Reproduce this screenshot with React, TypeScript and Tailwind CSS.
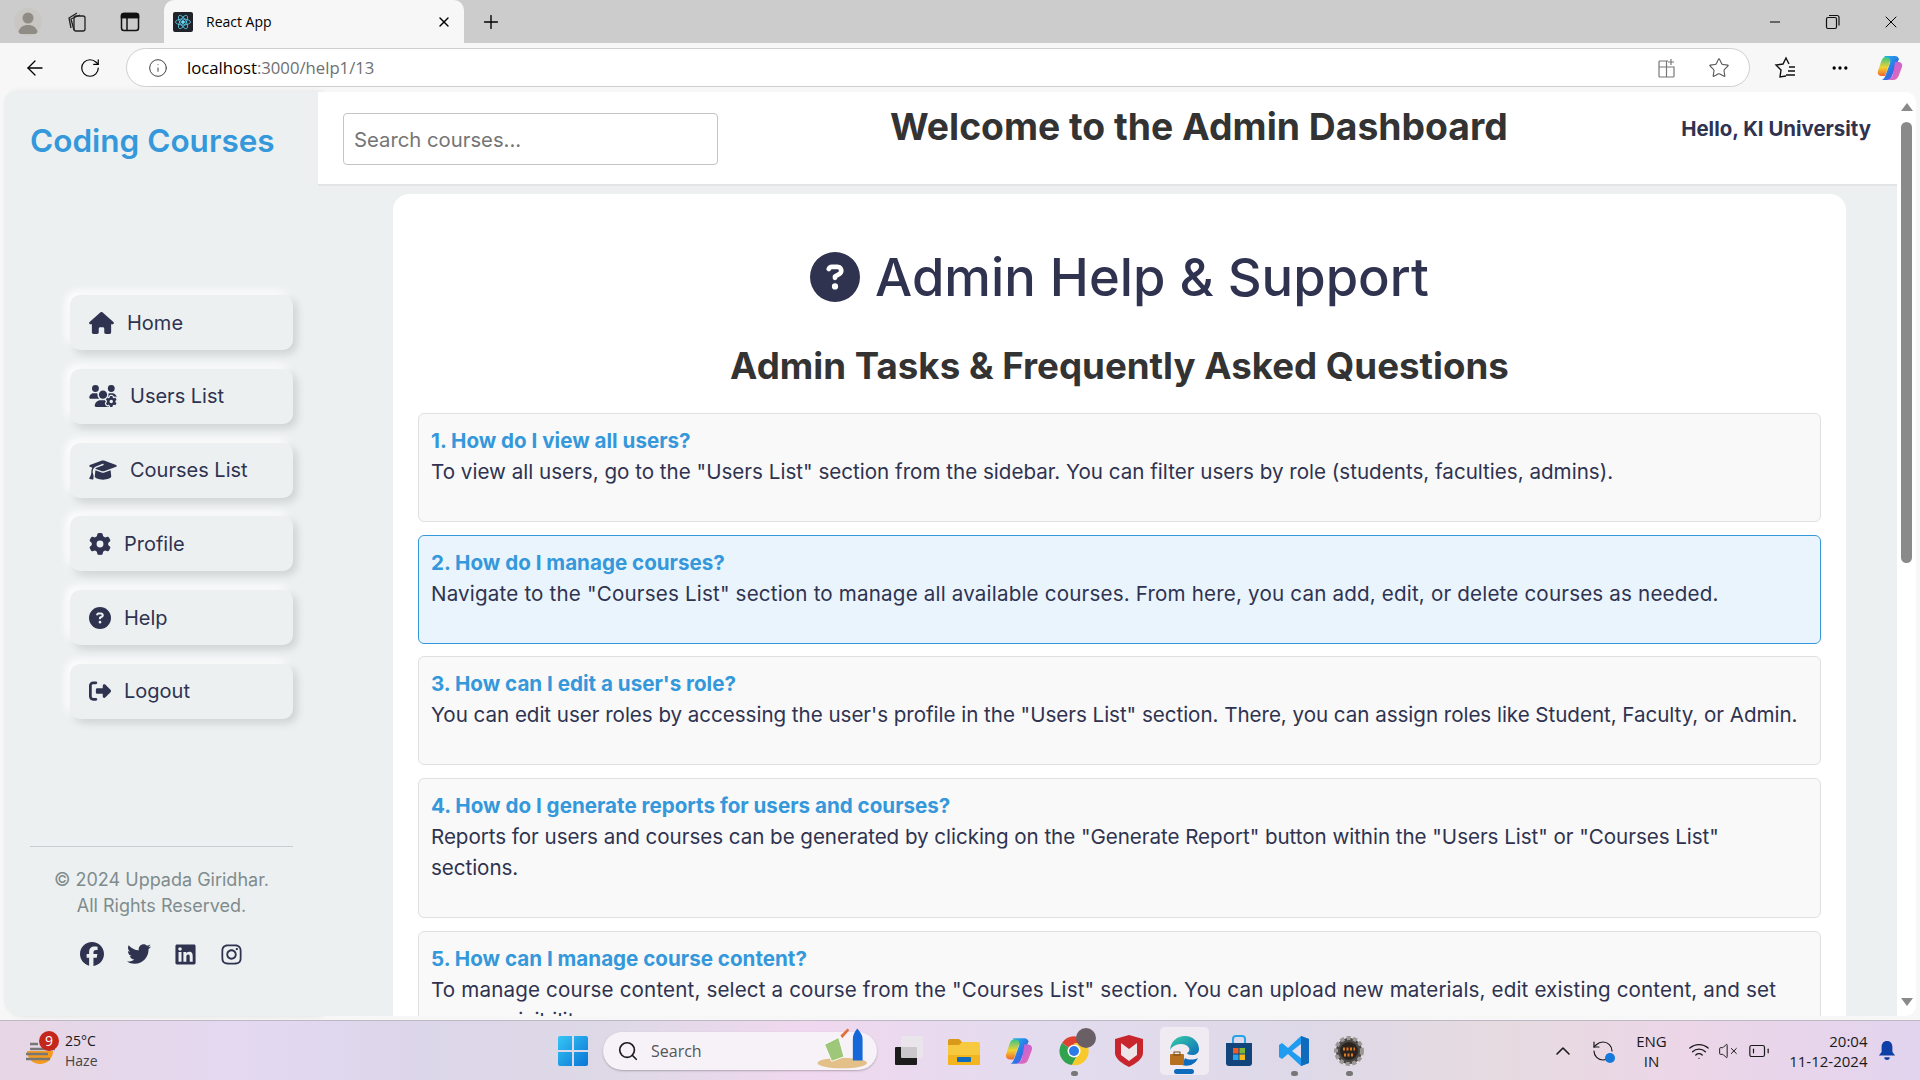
import type { ReactNode } from 'react';
import {
  FaCircleQuestion,
  FaFacebook,
  FaGear,
  FaGraduationCap,
  FaHouse,
  FaInstagram,
  FaLinkedin,
  FaRightFromBracket,
  FaTwitter,
  FaUsersGear,
} from 'react-icons/fa6';
import {
  ArrowLeft,
  BatteryLow,
  ChevronUp,
  Ellipsis,
  Info,
  Minus,
  Plus,
  RefreshCcw,
  RotateCw,
  Search,
  Star,
  VolumeX,
  Wifi,
  X,
} from 'lucide-react';

const UI = 'font-["Open_Sans","Noto_Sans",sans-serif]';

const NAV = [
  { label: 'Home', icon: <FaHouse className="h-[22px] w-[25px]" />, gap: 'gap-[13px]' },
  { label: 'Users List', icon: <FaUsersGear className="h-[22px] w-[28px]" />, gap: 'gap-[13px]' },
  { label: 'Courses List', icon: <FaGraduationCap className="h-[22px] w-[28px]" />, gap: 'gap-[13px]' },
  { label: 'Profile', icon: <FaGear className="h-[22px] w-[22px]" />, gap: 'gap-[13px]' },
  { label: 'Help', icon: <FaCircleQuestion className="h-[22px] w-[22px]" />, gap: 'gap-[13px]' },
  { label: 'Logout', icon: <FaRightFromBracket className="h-[22px] w-[22px] -scale-x-100 rotate-180" />, gap: 'gap-[13px]' },
];

const FAQS = [
  {
    q: '1. How do I view all users?',
    a: 'To view all users, go to the "Users List" section from the sidebar. You can filter users by role (students, faculties, admins).',
    tracking: 'tracking-[0px]',
  },
  {
    q: '2. How do I manage courses?',
    a: 'Navigate to the "Courses List" section to manage all available courses. From here, you can add, edit, or delete courses as needed.',
    tracking: 'tracking-[0.17px]',
    active: true,
  },
  {
    q: "3. How can I edit a user's role?",
    a: 'You can edit user roles by accessing the user\'s profile in the "Users List" section. There, you can assign roles like Student, Faculty, or Admin.',
    tracking: 'tracking-[-0.04px]',
  },
  {
    q: '4. How do I generate reports for users and courses?',
    a: 'Reports for users and courses can be generated by clicking on the "Generate Report" button within the "Users List" or "Courses List" sections.',
    tracking: 'tracking-[-0.05px]',
  },
  {
    q: '5. How can I manage course content?',
    a: 'To manage course content, select a course from the "Courses List" section. You can upload new materials, edit existing content, and set access visibility.',
    tracking: 'tracking-[0.14px]',
  },
];

function Slot({ w, children, className = '' }: { w: string; children: ReactNode; className?: string }) {
  return <div className={`flex shrink-0 items-center justify-center ${w} ${className}`}>{children}</div>;
}

function BrowserChrome() {
  return (
    <div className={`${UI} shrink-0 text-black`}>
      <div className="flex h-[43px] items-end bg-[#cccccc]">
        <div className="flex h-[43px] items-center pl-[14px]">
          <div className="flex h-[28px] w-[28px] items-end justify-center overflow-hidden rounded-full bg-[#c9c7c3]">
            <svg viewBox="0 0 28 28" className="h-[28px] w-[28px]">
              <circle cx="14" cy="10" r="5.5" fill="#8f8c86" />
              <path d="M4 26c1-7 5-9 10-9s9 2 10 9z" fill="#8f8c86" />
            </svg>
          </div>
          <Slot w="w-[53px] ml-[8px]">
            <svg viewBox="0 0 24 24" className="h-[24px] w-[24px]" fill="none" stroke="#222" strokeWidth="1.3">
              <rect x="9" y="6" width="11" height="15" rx="2" />
              <path d="M6 18 4 8l8-5M9 20 6 9l9-4" />
            </svg>
          </Slot>
          <Slot w="w-[53px]">
            <svg viewBox="0 0 20 20" className="h-[20px] w-[20px]" fill="none" stroke="#111" strokeWidth="1.5">
              <rect x="1.5" y="1.5" width="17" height="17" rx="2.5" />
              <path d="M1.5 5.5h17M7 5.5v13" />
              <path d="M1.5 5.5v-2a2 2 0 0 1 2-2h13a2 2 0 0 1 2 2v2z" fill="#111" />
            </svg>
          </Slot>
        </div>
        <div className="ml-[8px] flex h-[43px] w-[300px] items-center rounded-t-[10px] bg-[#f7f7f7] pl-[9px]">
          <div className="flex h-[20px] w-[20px] items-center justify-center rounded-[2px] bg-[#20232a]">
            <svg viewBox="-12 -12 24 24" className="h-[18px] w-[18px]" fill="none" stroke="#61dafb" strokeWidth="1">
              <circle r="2" fill="#61dafb" />
              <ellipse rx="10" ry="4" />
              <ellipse rx="10" ry="4" transform="rotate(60)" />
              <ellipse rx="10" ry="4" transform="rotate(120)" />
            </svg>
          </div>
          <span className="ml-[13px] text-[14px]">React App</span>
          <X className="ml-auto mr-[12px] h-[16px] w-[16px]" strokeWidth={2} />
        </div>
        <Slot w="w-[54px] h-[43px]">
          <Plus className="h-[22px] w-[22px]" strokeWidth={1.5} />
        </Slot>
        <div className="ml-auto flex h-[43px] items-center">
          <Slot w="w-[58px]"><Minus className="h-[16px] w-[16px]" strokeWidth={1.5} /></Slot>
          <Slot w="w-[58px]">
            <svg viewBox="0 0 16 16" className="h-[16px] w-[16px]" fill="none" stroke="#111" strokeWidth="1.2">
              <rect x="1.5" y="3.5" width="10" height="11" rx="1.5" />
              <path d="M4 1.5h8a2 2 0 0 1 2 2v8" />
            </svg>
          </Slot>
          <Slot w="w-[58px]"><X className="h-[20px] w-[20px]" strokeWidth={1.2} /></Slot>
        </div>
      </div>
      <div className="flex h-[49px] items-center bg-[#f7f7f7]">
        <Slot w="w-[70px]"><ArrowLeft className="h-[24px] w-[24px]" strokeWidth={1.3} /></Slot>
        <Slot w="w-[40px]"><RotateCw className="h-[22px] w-[22px]" strokeWidth={1.3} /></Slot>
        <div className="ml-[16px] flex h-[39px] w-[1624px] shrink-0 items-center rounded-full border border-[#cfcfcf] bg-white">
          <Info className="ml-[21px] h-[20px] w-[20px] text-[#444]" strokeWidth={1.2} />
          <span className="ml-[19px] text-[16.7px]">
            localhost<span className="text-[#6f6f6f]">:3000/help1/13</span>
          </span>
          <div className="ml-auto flex items-center pr-[19px]">
            <svg viewBox="0 0 20 20" className="h-[20px] w-[20px]" fill="none" stroke="#777" strokeWidth="1.2">
              <path d="M11 3H3a1 1 0 0 0-1 1v14a1 1 0 0 0 1 1h13a1 1 0 0 0 1-1V9H2M9.5 3v16M14 1v6M11 4h6" />
            </svg>
            <Star className="ml-[31px] h-[22px] w-[22px] text-[#555]" strokeWidth={1.2} />
          </div>
        </div>
        <Slot w="w-[70px]">
          <svg viewBox="0 0 24 24" className="h-[24px] w-[24px]" fill="none" stroke="#111" strokeWidth="1.4">
            <path d="M13 20 7 21l1-7-5-5 7-1 3-6 3 6M16 11h6M15 15h7M13 19h9" />
          </svg>
        </Slot>
        <Slot w="w-[40px]"><Ellipsis className="h-[20px] w-[20px]" strokeWidth={2} /></Slot>
        <Slot w="w-[60px]">
          <CopilotIcon size="h-[28px] w-[28px]" />
        </Slot>
      </div>
    </div>
  );
}

function CopilotIcon({ size }: { size: string }) {
  return (
    <svg viewBox="0 0 28 28" className={size}>
      <defs>
        <linearGradient id="cpa" x1="0" y1="0" x2="1" y2="1">
          <stop offset="0" stopColor="#19c3f0" />
          <stop offset="0.6" stopColor="#2f6fe4" />
          <stop offset="1" stopColor="#b04bd8" />
        </linearGradient>
        <linearGradient id="cpb" x1="0" y1="0" x2="0" y2="1">
          <stop offset="0" stopColor="#33c48d" />
          <stop offset="0.55" stopColor="#f2d230" />
          <stop offset="1" stopColor="#f0662e" />
        </linearGradient>
        <linearGradient id="cpc" x1="0" y1="0" x2="1" y2="1">
          <stop offset="0" stopColor="#b760e6" />
          <stop offset="1" stopColor="#e96bb0" />
        </linearGradient>
      </defs>
      <path d="M8 2h11c2 0 3 1 4 3l-7 17c-1 3-3 4-5 4H6c2-1 3-3 4-6L14 9c1-3-1-4-3-4z" fill="url(#cpa)" />
      <path d="M10 3C7 3 6 5 5 8l-3 9c-1 3 1 5 4 5h3l5-14c1-3-1-5-4-5z" fill="url(#cpb)" />
      <path d="M19 8h3c3 0 5 2 4 5l-3 8c-1 3-3 5-6 5h-5c3-1 4-3 5-6z" fill="url(#cpc)" />
    </svg>
  );
}

function Sidebar() {
  return (
    <aside className="flex w-[314px] shrink-0 flex-col rounded-tl-[10px] rounded-bl-[16px] bg-[#ecf0f1] pl-[26px] pr-[25px] shadow-[4px_0_6px_rgba(0,0,0,0.1)]">
      <h2 className="mt-[25px] h-[48px] text-[31.5px] leading-[48px] font-semibold text-[#3498db]">
        Coding Courses
      </h2>
      <nav className="mt-[130px] ml-[40px] flex flex-col gap-[18.8px]">
        {NAV.map((item) => (
          <div
            key={item.label}
            className={`flex h-[55px] items-center rounded-[10px] bg-[#ecf0f1] pl-[19px] text-[20px] text-[#2f3350] shadow-[4px_4px_8px_rgba(0,0,0,0.13),-4px_-4px_8px_#ffffff] ${item.gap}`}
          >
            {item.icon}
            <span>{item.label}</span>
          </div>
        ))}
      </nav>
      <div className="mt-auto mb-[50px] border-t border-[#c9cdd0] pt-[20px] text-center text-[18px] leading-[26px] text-[#7f8c8d]">
        <p>© 2024 Uppada Giridhar.</p>
        <p>All Rights Reserved.</p>
        <div className="mt-[23px] flex items-center justify-center gap-[23px] text-[#2f3350]">
          <FaFacebook className="h-[24px] w-[24px]" />
          <FaTwitter className="h-[24px] w-[24px]" />
          <FaLinkedin className="h-[23px] w-[23px]" />
          <FaInstagram className="h-[23px] w-[23px]" />
        </div>
      </div>
    </aside>
  );
}

function Faq({ q, a, tracking, active }: { q: string; a: string; tracking: string; active?: boolean }) {
  return (
    <div
      className={`rounded-[6px] border px-[12px] pt-[13px] pb-[33.5px] ${
        active ? 'border-[#3498db] bg-[#eaf4fc]' : 'border-[#e0e0e0] bg-[#f9f9f9]'
      }`}
    >
      <h3 className="h-[29px] text-[20.6px] leading-[28px] font-bold text-[#3498db]">{q}</h3>
      <p className={`text-[20.6px] leading-[31.5px] text-[#2f3350] ${tracking}`}>{a}</p>
    </div>
  );
}

function Main() {
  return (
    <div className="flex min-w-0 flex-1 flex-col">
      <header className="flex h-[94px] shrink-0 items-start border-b-2 border-[#e2e4e5] bg-white">
        <input
          readOnly
          placeholder="Search courses..."
          className="mt-[21px] ml-[25px] h-[52px] w-[375px] rounded-[4px] border border-[#c4c4c4] px-[10px] text-[20.3px] text-[#333] placeholder:text-[#757575]"
        />
        <h1 className="mt-[12px] ml-[172px] w-[617px] text-center text-[37.3px] leading-[46px] font-bold whitespace-nowrap text-[#333333]">
          Welcome to the Admin Dashboard
        </h1>
        <span className="mt-[22px] ml-auto mr-[26px] text-[20.4px] leading-[30px] font-bold text-[#2f3350]">
          Hello, KI University
        </span>
      </header>
      <div className="min-h-0 flex-1 overflow-hidden bg-[#ecf0f1] pt-[8px] pr-[51px] pl-[75px]">
        <div className="rounded-t-[16px] bg-white px-[25px] pt-[58px]">
          <div className="flex h-[50px] items-center justify-center gap-[15px]">
            <FaCircleQuestion className="h-[50px] w-[50px] text-[#2f3350]" />
            <span className="text-[52.5px] leading-[50px] font-medium text-[#2f3350]">Admin Help &amp; Support</span>
          </div>
          <h2 className="mt-[42px] h-[44px] text-center text-[36.7px] leading-[44px] font-bold text-[#333333]">
            Admin Tasks &amp; Frequently Asked Questions
          </h2>
          <div className="mt-[25px] flex flex-col gap-[12.5px] pb-[40px]">
            {FAQS.map((f) => (
              <Faq key={f.q} q={f.q} a={f.a} tracking={f.tracking} active={f.active} />
            ))}
          </div>
        </div>
      </div>
    </div>
  );
}

function Scrollbar() {
  return (
    <div className="flex w-[19px] shrink-0 flex-col items-center rounded-r-[10px] bg-white">
      <div className="mt-[11px] h-0 w-0 border-x-[6px] border-b-[8px] border-x-transparent border-b-[#8a8a8a]" />
      <div className="mt-[11px] h-[441px] w-[11px] rounded-full bg-[#8a8a8a]" />
      <div className="mt-auto mb-[10px] h-0 w-0 border-x-[6px] border-t-[8px] border-x-transparent border-t-[#8a8a8a]" />
    </div>
  );
}

function Taskbar() {
  return (
    <div
      className={`${UI} flex h-[60px] shrink-0 items-center border-t border-[#bdb8c4] bg-[linear-gradient(90deg,#e7d6e4_0%,#e4d9f1_12%,#dcd6ea_22%,#ded9e6_32%,#f0d8ef_42%,#e2dcee_55%,#ded9e8_68%,#e6dbe0_78%,#ecd6e8_88%,#e2d4ee_100%)] text-[#1a1a1a]`}
    >
      <div className="ml-[25px] flex w-[533px] shrink-0 items-center">
        <div className="relative h-[34px] w-[34px]">
          <svg viewBox="0 0 30 30" className="absolute top-[3px] left-0 h-[30px] w-[30px]">
            <path d="M3 14h26a13 13 0 0 1-26 0z" fill="#f39a1f" transform="translate(-1 0)" />
            <path d="M5 7h8M5 12h26M1 17h22M1 22h24" stroke="#777" strokeWidth="2.5" />
          </svg>
          <span className="absolute -top-[3px] left-[14px] flex h-[20px] w-[20px] items-center justify-center rounded-full bg-[#c4281c] text-[14px] text-white">
            9
          </span>
        </div>
        <div className="ml-[6px] flex flex-col text-[14px] leading-[20px]">
          <span>25°C</span>
          <span className="text-[#444]">Haze</span>
        </div>
      </div>
      <svg viewBox="0 0 30 30" className="h-[30px] w-[30px] shrink-0">
        <defs>
          <linearGradient id="win" x1="0" y1="0" x2="1" y2="1">
            <stop offset="0" stopColor="#35c6f4" />
            <stop offset="1" stopColor="#0a74d6" />
          </linearGradient>
        </defs>
        <path d="M0 2a2 2 0 0 1 2-2h12v14H0zM16 0h12a2 2 0 0 1 2 2v12H16zM0 16h14v14H2a2 2 0 0 1-2-2zM16 16h14v12a2 2 0 0 1-2 2H16z" fill="url(#win)" />
      </svg>
      <div className="ml-[15px] flex h-[38px] w-[274px] shrink-0 items-center rounded-full bg-[#f6f2f8] shadow-[0_1px_2px_rgba(0,0,0,0.25)]">
        <Search className="ml-[14px] h-[22px] w-[22px]" strokeWidth={1.8} />
        <span className="ml-[12px] text-[16px] text-[#555]">Search</span>
        <svg viewBox="0 0 60 52" className="mt-[-6px] ml-auto mr-[4px] h-[46px] w-[58px]">
          <ellipse cx="28" cy="43" rx="28" ry="6" fill="#e4c089" />
          <path d="M8 22l16-8 6 22-14 5z" fill="#9ec77a" stroke="#fff" />
          <path d="M40 40V16c0-5 2-8 5-12 3 4 6 7 6 12v24z" fill="#1668d8" />
          <path d="M26 12l8-8 2 2-8 9z" fill="#e2703a" />
        </svg>
      </div>
      <div className="ml-[4.5px] flex shrink-0 items-center">
        <Slot w="w-[55px]">
          <svg viewBox="0 0 32 32" className="h-[32px] w-[32px]">
            <rect x="2" y="12" width="22" height="18" rx="1" fill="#1c1c1c" />
            <rect x="8" y="1" width="22" height="22" rx="1" fill="#e9e6ea" opacity="0.85" />
          </svg>
        </Slot>
        <Slot w="w-[55px]">
          <svg viewBox="0 0 32 28" className="h-[28px] w-[32px]">
            <path d="M0 4a2 2 0 0 1 2-2h9l3 3h16a2 2 0 0 1 2 2v19a2 2 0 0 1-2 2H2a2 2 0 0 1-2-2z" fill="#f7c93e" />
            <path d="M0 4a2 2 0 0 1 2-2h9l3 3-3 3H0z" fill="#d99a19" />
            <rect x="0" y="18" width="32" height="10" rx="1" fill="#f2b41f" />
            <rect x="9" y="20" width="14" height="5" rx="1" fill="#0f6cbd" />
          </svg>
        </Slot>
        <Slot w="w-[55px]"><CopilotIcon size="h-[32px] w-[30px]" /></Slot>
        <Slot w="w-[55px]" className="relative">
          <svg viewBox="0 0 32 32" className="h-[32px] w-[32px]">
            <path d="M16 16 4 8a14 14 0 0 1 24 0z" fill="#e0402f" />
            <path d="M4 8a14 14 0 0 0 10 22l6-11z" fill="#32a24e" />
            <path d="M28 8H16l4 11-6 11A14 14 0 0 0 28 8z" fill="#f8c92a" />
            <circle cx="16" cy="16" r="6.5" fill="#fff" />
            <circle cx="16" cy="16" r="5" fill="#2d7be6" />
          </svg>
          <span className="absolute top-[-7px] left-[29px] h-[20px] w-[20px] rounded-full bg-[#6b5f66]" />
          <span className="absolute bottom-[-9px] h-[5px] w-[7px] rounded-full bg-[#777]" />
        </Slot>
        <Slot w="w-[55px]">
          <svg viewBox="0 0 28 32" className="h-[32px] w-[28px]">
            <path d="M0 4 14 0l14 4v14c0 6-8 11-14 14C8 29 0 24 0 18z" fill="#c8252c" />
            <path d="M6 8v12l8 6 8-6V8l-8 6z" fill="#eee5e9" />
          </svg>
        </Slot>
        <Slot w="w-[49px]" className="relative mx-[3px] h-[48px] rounded-[5px] bg-[#f0ebf3]">
          <svg viewBox="0 0 32 32" className="h-[32px] w-[32px]">
            <defs>
              <linearGradient id="edge" x1="0" y1="0" x2="1" y2="1">
                <stop offset="0" stopColor="#37cfa5" />
                <stop offset="1" stopColor="#0f6cbd" />
              </linearGradient>
            </defs>
            <path d="M2 15C3 6 9 1 17 1c8 0 14 6 14 13 0 4-3 6-7 6-3 0-5-1-5-2 2-1 3-3 2-5-2-4-8-5-13-3-3 1-5 3-6 5z" fill="url(#edge)" />
            <path d="M14 30c6 2 13 0 16-7-4 2-10 2-13 0z" fill="#0f6cbd" />
            <rect x="2" y="19" width="14" height="11" rx="1" fill="#b6701f" />
            <rect x="6" y="17" width="6" height="3" fill="none" stroke="#7a4a12" />
          </svg>
          <span className="absolute bottom-[1px] h-[5px] w-[20px] rounded-full bg-[#0f6cbd]" />
        </Slot>
        <Slot w="w-[55px]">
          <svg viewBox="0 0 28 32" className="h-[32px] w-[28px]">
            <path d="M1 8h26v20a3 3 0 0 1-3 3H4a3 3 0 0 1-3-3z" fill="#12457c" />
            <path d="M8 8V4a3 3 0 0 1 3-3h6a3 3 0 0 1 3 3v4" fill="none" stroke="#27a3e8" strokeWidth="2" />
            <rect x="8" y="13" width="5.5" height="5.5" fill="#ef5a29" />
            <rect x="14.5" y="13" width="5.5" height="5.5" fill="#7cb83a" />
            <rect x="8" y="19.5" width="5.5" height="5.5" fill="#2aa3e8" />
            <rect x="14.5" y="19.5" width="5.5" height="5.5" fill="#fbb916" />
          </svg>
        </Slot>
        <Slot w="w-[55px]" className="relative">
          <svg viewBox="0 0 32 32" className="h-[32px] w-[32px]">
            <path d="M23 1 10 13 4 8 1 10v12l3 2 6-5 13 12 8-3V4z" fill="#1f9cf0" />
            <path d="M23 1v30l8-3V4z" fill="#0f6cbd" />
            <path d="M23 9v14l-9-7z" fill="#e4dded" />
          </svg>
          <span className="absolute bottom-[-9px] h-[5px] w-[7px] rounded-full bg-[#777]" />
        </Slot>
        <Slot w="w-[55px]" className="relative">
          <svg viewBox="0 0 32 32" className="h-[32px] w-[32px]">
            <circle cx="16" cy="16" r="13" fill="#4b4745" stroke="#9b9794" strokeWidth="4" strokeDasharray="4 2.5" />
            <circle cx="16" cy="16" r="9" fill="#2a2320" />
            <path d="M10 14h12M11 20h10" stroke="#e07a1e" strokeWidth="3" strokeDasharray="2 1.5" />
          </svg>
          <span className="absolute bottom-[-9px] h-[5px] w-[7px] rounded-full bg-[#777]" />
        </Slot>
      </div>
      <div className="ml-[174px] flex shrink-0 items-center">
        <ChevronUp className="h-[24px] w-[24px]" strokeWidth={1.6} />
        <div className="relative ml-[16px] h-[24px] w-[24px]">
          <RefreshCcw className="h-[24px] w-[24px]" strokeWidth={1.2} />
          <span className="absolute right-0 bottom-0 h-[10px] w-[10px] rounded-full bg-[#1478dc]" />
        </div>
        <div className="ml-[19px] flex w-[36px] flex-col items-center text-[15px] leading-[20px]">
          <span>ENG</span>
          <span>IN</span>
        </div>
        <Wifi className="ml-[18px] h-[22px] w-[22px]" strokeWidth={1.4} />
        <VolumeX className="ml-[8px] h-[20px] w-[20px]" strokeWidth={1.2} />
        <BatteryLow className="ml-[10px] h-[22px] w-[22px]" strokeWidth={1.3} />
        <div className="ml-[19px] flex w-[79px] flex-col items-end text-[15px] leading-[20px]">
          <span>20:04</span>
          <span className="whitespace-nowrap">11-12-2024</span>
        </div>
        <svg viewBox="0 0 20 22" className="ml-[10px] h-[20px] w-[18px]" fill="#0d3fa6">
          <path d="M10 0c4 0 6 3 6 7v5l3 4H1l3-4V7c0-4 2-7 6-7zM7 18h6a3 3 0 0 1-6 0z" />
        </svg>
      </div>
    </div>
  );
}

export default function App() {
  return (
    <div className="flex h-screen w-screen flex-col overflow-hidden bg-[#f7f7f7]">
      <BrowserChrome />
      <div className="flex min-h-0 flex-1 pr-[4px] pb-[4px] pl-[4px] font-['Inter',sans-serif]">
        <Sidebar />
        <Main />
        <Scrollbar />
      </div>
      <Taskbar />
    </div>
  );
}
